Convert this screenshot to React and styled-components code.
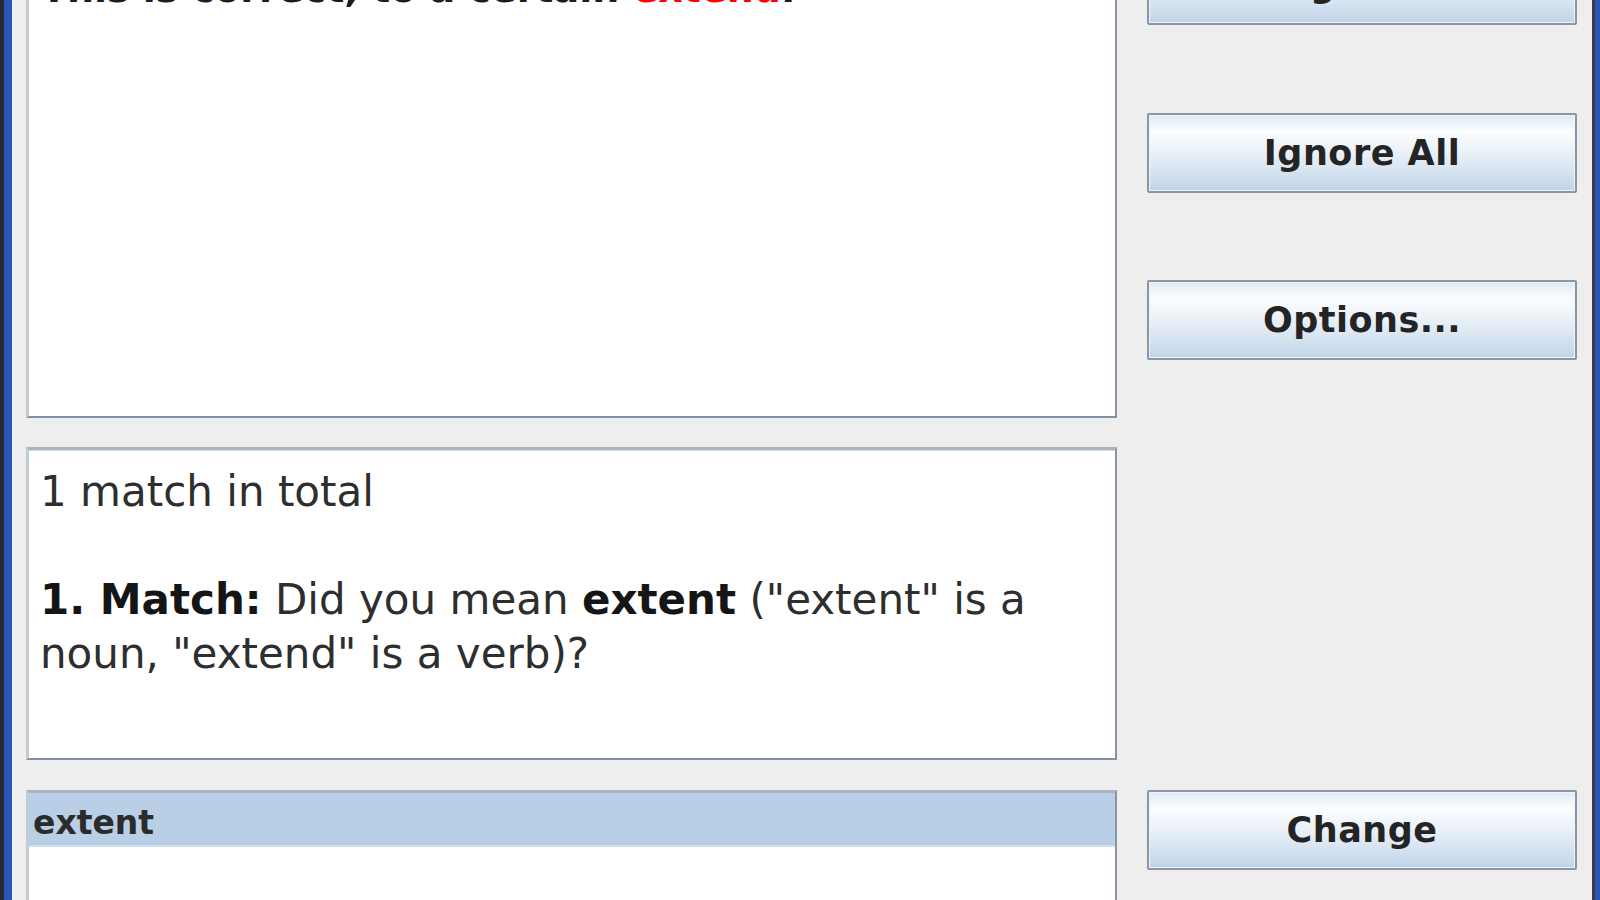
import React from "react";
import styled, { createGlobalStyle } from "styled-components";

const GlobalStyle = createGlobalStyle`
    html, body {
        margin: 0;
        padding: 0;
        height: 100%;
        overflow: hidden;
        background: #eeeeee;
        font-family: "DejaVu Sans", Verdana, sans-serif;
    }
    #root {
        height: 100%;
    }
`;

const Window = styled.div`
    display: flex;
    height: 900px;
    width: 1600px;
    overflow: hidden;
`;

const FrameEdge = styled.div`
    flex: none;
    width: ${(p) => p.width}px;
    background: linear-gradient(
        90deg,
        ${(p) => (p.side === "left" ? "#262a30 0, #262a30 4px, #2b55b6 4px" : "#3a3d44 0, #3a3d44 3px, #2b55b6 3px")},
        #2b55b6 100%
    );
`;

const Content = styled.div`
    flex: 1;
    display: grid;
    grid-template-columns: 1091px 430px;
    column-gap: 30px;
    align-items: start;
    padding: 0 15px 0 14px;
    margin-top: -100px;
    background: #eeeeee;
`;

const LeftColumn = styled.div`
    display: flex;
    flex-direction: column;
`;

const RightColumn = styled.div`
    display: flex;
    flex-direction: column;
    padding-top: 45px;
`;

const Pane = styled.div`
    box-sizing: border-box;
    height: ${(p) => p.height}px;
    margin-bottom: ${(p) => p.gap || 0}px;
    background: #ffffff;
    border-top: 3px solid #a9b4bf;
    border-left: 3px solid #c3cbd3;
    border-right: 2px solid #8795a3;
    border-bottom: 2px solid #8291a0;
    box-shadow: inset 0 1px 0 #d4dbe2;
    overflow: hidden;
`;

const SentenceText = styled.div`
    padding: 59px 12px 0 12px;
    font-size: 38px;
    line-height: 54px;
    font-weight: bold;
    color: #1c1c1c;
    white-space: nowrap;
`;

const ErrorWord = styled.span`
    color: #ff0000;
`;

const MessageText = styled.div`
    padding: 15px 12px 0 11px;
    font-size: 42px;
    line-height: 54px;
    color: #2e2e2e;
`;

const Strong = styled.b`
    font-weight: bold;
    color: #151515;
`;

const SuggestionRow = styled.div`
    box-sizing: border-box;
    height: 54px;
    padding: 7px 0 0 4px;
    background: #b8cfe5;
    border-bottom: 2px solid #cfdeed;
    font-size: 33px;
    line-height: 45px;
    font-weight: bold;
    color: #2b2b2b;
`;

const Button = styled.button`
    box-sizing: border-box;
    height: 80px;
    width: 100%;
    margin-bottom: ${(p) => p.gap || 0}px;
    padding: 0;
    border: 2px solid #8896a5;
    border-radius: 2px;
    background: linear-gradient(
        180deg,
        #dfe9f4 0%,
        #fbfdff 22%,
        #f6f9fc 32%,
        #e0eaf4 62%,
        #c0d4e8 100%
    );
    box-shadow: inset 0 0 0 1px #eef3f8;
    font-family: "DejaVu Sans", Verdana, sans-serif;
    font-size: 35px;
    font-weight: bold;
    color: #242424;
    letter-spacing: 0.5px;
    cursor: pointer;
`;

const App = () => {
    return (
        <>
            <GlobalStyle />
            <Window>
                <FrameEdge side="left" width={12} />
                <Content>
                    <LeftColumn>
                        <Pane height={518} gap={29}>
                            <SentenceText>
                                This is correct, to a certain <ErrorWord>extend</ErrorWord>.
                            </SentenceText>
                        </Pane>
                        <Pane height={313} gap={30}>
                            <MessageText>
                                1 match in total
                                <br />
                                <br />
                                <Strong>1. Match:</Strong> Did you mean <Strong>extent</Strong> ("extent" is a
                                <br />
                                noun, "extend" is a verb)?
                            </MessageText>
                        </Pane>
                        <Pane height={200}>
                            <SuggestionRow>extent</SuggestionRow>
                        </Pane>
                    </LeftColumn>
                    <RightColumn>
                        <Button gap={88}>Ignore</Button>
                        <Button gap={87}>Ignore All</Button>
                        <Button gap={430}>Options...</Button>
                        <Button>Change</Button>
                    </RightColumn>
                </Content>
                <FrameEdge side="right" width={8} />
            </Window>
        </>
    );
};

export default App;
